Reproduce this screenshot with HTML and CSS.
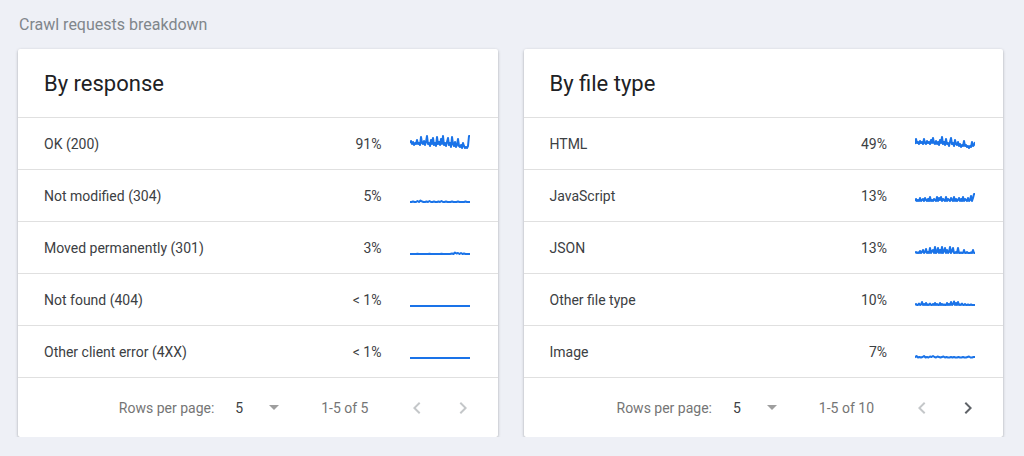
FILE: index.html
```html
<!DOCTYPE html>
<html lang="en">
<head>
  <meta charset="UTF-8" />
  <title>Crawl requests breakdown</title>
  <link rel="stylesheet" href="styles.css">
</head>
<body>

<h3 class="page-title">Crawl requests breakdown</h3>

<div class="cards">
  <div class="card">
    <h2>By response</h2>
    <div class="row">
      <span class="name">OK (200)</span>
      <span class="pct">91%</span>
      <svg class="spark" viewBox="0 0 60 20"><polyline points="0,9 1,7 2,10 3,8 4,11 5,9 6,10 7,6 8,10 9,9 10,11 11,3 12,9 13,10 14,7 15,11 16,8 17,2 18,10 19,9 20,12 21,6 22,10 23,4 24,11 25,9 26,12 27,3 28,10 29,8 30,11 31,5 32,10 33,2 34,11 35,9 36,12 37,8 38,4 39,11 40,9 41,13 42,3 43,10 44,12 45,8 46,13 47,11 48,5 49,12 50,13 51,11 52,14 53,9 54,12 55,14 56,13 57,14 58,12 59,2 60,2"/></svg>
    </div>
    <div class="row">
      <span class="name">Not modified (304)</span>
      <span class="pct">5%</span>
      <svg class="spark" viewBox="0 0 60 20"><polyline points="0,16 1.5,16 3,15.5 4.5,16 6,16 7.5,15 9,16 10.5,14.5 12,15.5 13.5,16 15,16 16.5,15.5 18,16 19.5,15 21,16 22.5,16 24,15.5 25.5,16 27,16 28.5,15.5 30,16 31.5,15 33,16 34.5,16 36,15.5 37.5,16 39,16 40.5,16 42,15.5 43.5,16 45,16 46.5,16 48,15.5 49.5,16 51,16 52.5,16 54,16 55.5,15.5 57,16 58.5,16 60,16"/></svg>
    </div>
    <div class="row">
      <span class="name">Moved permanently (301)</span>
      <span class="pct">3%</span>
      <svg class="spark" viewBox="0 0 60 20"><polyline points="0,16 6,16 7.5,15.7 9,16 18,16 19.5,15.7 21,16 30,16 31.5,15.7 33,16 40,16 42,15.5 43.5,16 45,14.5 46.5,15.5 48,15 49.5,16 51,15 52.5,16 54,15.5 55.5,16 57,16 60,16"/></svg>
    </div>
    <div class="row">
      <span class="name">Not found (404)</span>
      <span class="pct">&lt; 1%</span>
      <svg class="spark" viewBox="0 0 60 20"><polyline points="0,16 60,16"/></svg>
    </div>
    <div class="row">
      <span class="name">Other client error (4XX)</span>
      <span class="pct">&lt; 1%</span>
      <svg class="spark" viewBox="0 0 60 20"><polyline points="0,16 60,16"/></svg>
    </div>
    <div class="pager">
      <span class="label">Rows per page:</span>
      <span class="size">5</span>
      <svg class="caret" viewBox="0 0 10 5"><path d="M0 0 L10 0 L5 5 Z"/></svg>
      <span class="range">1-5 of 5</span>
      <svg class="chev off" viewBox="0 0 24 24"><path d="M15.4 7.4 14 6l-6 6 6 6 1.4-1.4L10.8 12z"/></svg>
      <svg class="chev off" viewBox="0 0 24 24"><path d="M10 6 8.6 7.4 13.2 12l-4.6 4.6L10 18l6-6z"/></svg>
    </div>
  </div>

  <div class="card">
    <h2>By file type</h2>
    <div class="row">
      <span class="name">HTML</span>
      <span class="pct">49%</span>
      <svg class="spark" viewBox="0 0 60 20"><polyline points="0,10 1,5 2,9 3,8 4,10 5,7 6,9 7,8 8,10 9,5 10,9 11,10 12,7 13,9 14,8 15,10 16,6 17,9 18,4 19,9 20,10 21,7 22,10 23,8 24,11 25,6 26,9 27,3 28,10 29,8 30,11 31,5 32,10 33,9 34,12 35,8 36,4 37,10 38,9 39,12 40,6 41,10 42,11 43,8 44,12 45,10 46,13 47,11 48,12 49,7 50,12 51,11 52,13 53,12 54,14 55,12 56,13 57,8 58,12 59,11 60,8"/></svg>
    </div>
    <div class="row">
      <span class="name">JavaScript</span>
      <span class="pct">13%</span>
      <svg class="spark" viewBox="0 0 60 20"><polyline points="0,15 1,13 2,15 3,14 4,15 5,12 6,15 7,14 8,13 9,15 10,12 11,14 12,15 13,13 14,15 15,11 16,15 17,14 18,15 19,13 20,14 21,15 22,11 23,15 24,12 25,14 26,11 27,15 28,13 29,14 30,15 31,11 32,15 33,13 34,14 35,15 36,12 37,14 38,15 39,11 40,15 41,13 42,15 43,14 44,12 45,15 46,13 47,15 48,11 49,15 50,13 51,14 52,15 53,12 54,15 55,14 56,10 57,15 58,12 59,8 60,8"/></svg>
    </div>
    <div class="row">
      <span class="name">JSON</span>
      <span class="pct">13%</span>
      <svg class="spark" viewBox="0 0 60 20"><polyline points="0,15 1,14 2,15 3,14.5 4,15 5,13 6,15 7,14 8,12 9,15 10,14 11,11 12,15 13,14 14,15 15,10 16,15 17,13 18,12 19,15 20,9 21,15 22,14 23,10 24,15 25,12 26,15 27,9 28,15 29,13 30,10 31,15 32,12 33,15 34,14 35,9 36,15 37,13 38,10 39,15 40,15 41,14 42,15 43,10 44,15 45,15 46,14.5 47,15 48,15 49,12 50,15 51,15 52,14 53,15 54,15 55,15 56,14.5 57,15 58,12 59,15 60,15"/></svg>
    </div>
    <div class="row">
      <span class="name">Other file type</span>
      <span class="pct">10%</span>
      <svg class="spark" viewBox="0 0 60 20"><polyline points="0,15 1,14 2,15 3,15 4,13.5 5,15 6,14.5 7,12 8,15 9,14 10,15 11,13 12,15 13,14.5 14,15 15,13.5 16,15 17,15 18,14 19,15 20,13 21,15 22,14 23,15 24,15 25,13 26,15 27,14 28,15 29,14.5 30,15 31,15 32,13 33,15 34,14 35,15 36,12 37,15 38,14 39,11.5 40,15 41,13 42,15 43,12 44,15 45,14.5 46,15 47,13.5 48,15 49,15 50,14 51,15 52,15 53,14.5 54,15 55,15 56,14.5 57,15 58,15 59,15 60,15"/></svg>
    </div>
    <div class="row">
      <span class="name">Image</span>
      <span class="pct">7%</span>
      <svg class="spark" viewBox="0 0 60 20"><polyline points="0,15.5 1.5,14 3,15.5 4.5,15 6,15.5 7.5,15 9,14 10.5,15.5 12,15 13.5,15.5 15,14.5 16.5,15 18,14 19.5,15 21,15.5 22.5,14.5 24,15 25.5,15.5 27,15 28.5,14.5 30,15.5 31.5,15 33,15.5 34.5,15.5 36,15 37.5,15.5 39,15 40.5,15.5 42,15.5 43.5,15 45,15.5 46.5,15.5 48,15 49.5,15.5 51,15.5 52.5,15 54,14.5 55.5,15.5 57,15.5 58.5,15 60,15"/></svg>
    </div>
    <div class="pager">
      <span class="label">Rows per page:</span>
      <span class="size">5</span>
      <svg class="caret" viewBox="0 0 10 5"><path d="M0 0 L10 0 L5 5 Z"/></svg>
      <span class="range">1-5 of 10</span>
      <svg class="chev off" viewBox="0 0 24 24"><path d="M15.4 7.4 14 6l-6 6 6 6 1.4-1.4L10.8 12z"/></svg>
      <svg class="chev" viewBox="0 0 24 24"><path d="M10 6 8.6 7.4 13.2 12l-4.6 4.6L10 18l6-6z"/></svg>
    </div>
  </div>
</div>

</body>
</html>
```

FILE: styles.css
```css
body {
  font-family: Roboto, 'Noto Sans', sans-serif;
  background-color: #eef0f6;
  color: #3c4043;
  margin: 0;
  padding: 15px 21px 0 18px;
}

.page-title {
  margin: 0 0 14px 1px;
  font-size: 16px;
  line-height: 20px;
  font-weight: normal;
  color: #80868b;
}

.cards {
  display: grid;
  grid-template-columns: 1fr 1fr;
  gap: 26px;
}

.card {
  background: white;
  border-radius: 2px;
  box-shadow: 0 1px 3px rgba(60,64,67,0.3), 0 1px 2px rgba(60,64,67,0.15);
}

.card h2 {
  margin: 0;
  height: 68px;
  padding-left: 26px;
  display: flex;
  align-items: center;
  font-size: 22px;
  font-weight: normal;
  color: #202124;
}

.row {
  display: flex;
  align-items: center;
  height: 51px;
  border-top: 1px solid #e0e0e0;
  padding: 0 28px 0 26px;
  font-size: 14px;
}

.name {
  flex: 1;
}

.pct {
  text-align: right;
}

.spark {
  width: 60px;
  height: 20px;
  margin-left: 28px;
  margin-top: 1px;
}

.spark polyline {
  fill: none;
  stroke: #1a73e8;
  stroke-width: 2;
  stroke-linejoin: round;
}

.pager {
  display: flex;
  align-items: center;
  justify-content: flex-end;
  height: 59px;
  border-top: 1px solid #e0e0e0;
  padding-right: 23px;
  font-size: 14px;
  color: #757575;
}

.pager .size {
  margin-left: 21px;
  color: #3c4043;
}

.caret {
  width: 10px;
  height: 5px;
  margin-left: 26px;
  fill: #9e9e9e;
}

.range {
  margin-left: 42px;
}

.chev {
  width: 24px;
  height: 24px;
  margin-left: 22px;
  fill: #5f6368;
}

.range + .chev {
  margin-left: 36px;
}

.chev.off {
  fill: #c4c7c9;
}
```
